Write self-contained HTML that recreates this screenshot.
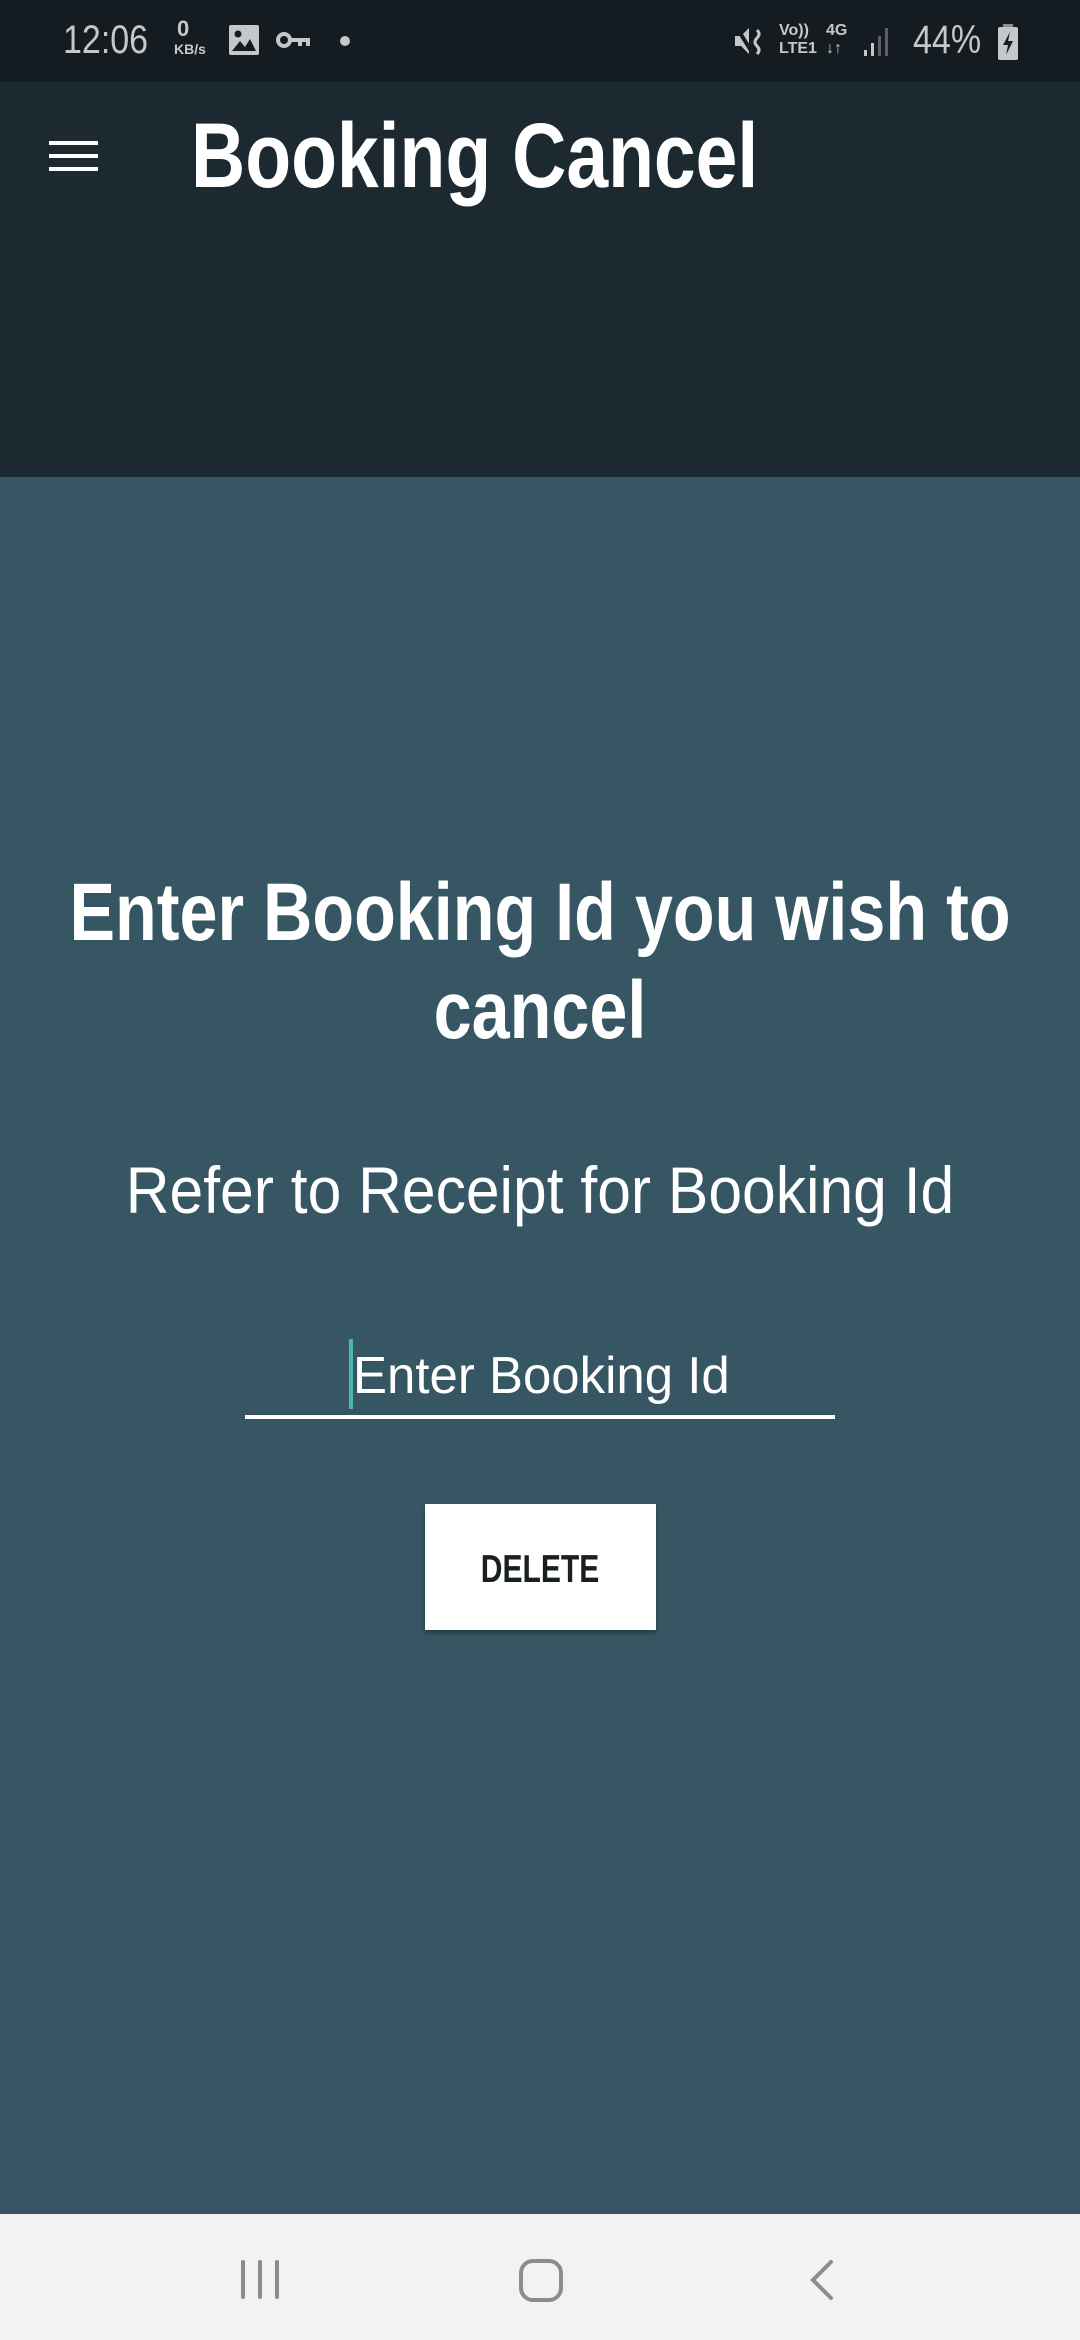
<!DOCTYPE html>
<html><head><meta charset="utf-8"><style>
*{margin:0;padding:0;box-sizing:border-box}
body{width:1080px;height:2340px;position:relative;overflow:hidden;background:#365663;font-family:"Liberation Sans",sans-serif;color:#fff}
.c{position:absolute;left:540px;line-height:1;white-space:nowrap}
</style></head><body>
<div style="position:absolute;left:0;top:0;width:1080px;height:82px;background:#151c21"></div>
<div style="position:absolute;left:0;top:82px;width:1080px;height:395px;background:#1c2930"></div>
<!-- status bar -->
<div style="position:absolute;left:63px;top:20px;font-size:40px;line-height:1;color:#c4c8ca;transform:scaleX(.85);transform-origin:left">12:06</div>
<div style="position:absolute;left:177px;top:18px;font-size:22px;line-height:1;color:#c4c8ca;font-weight:bold">0</div>
<div style="position:absolute;left:174px;top:42px;font-size:14px;line-height:1;color:#c4c8ca;font-weight:bold">KB/s</div>
<svg style="position:absolute;left:228px;top:24px" width="32" height="32" viewBox="0 0 32 32"><rect x="1" y="1" width="30" height="30" rx="2" fill="#c4c8ca"/><circle cx="10" cy="10" r="3.5" fill="#151c21"/><path d="M4 27 L12 17 L17 23 L22 15 L28 27Z" fill="#151c21"/></svg>
<svg style="position:absolute;left:276px;top:30px" width="36" height="22" viewBox="0 0 36 22"><circle cx="8" cy="10" r="6" fill="none" stroke="#c4c8ca" stroke-width="4"/><path d="M14 8 H34 V16 H30 V12 H26 V16 H22 V12 H14Z" fill="#c4c8ca"/></svg>
<div style="position:absolute;left:340px;top:36px;width:10px;height:10px;border-radius:50%;background:#c4c8ca"></div>
<svg style="position:absolute;left:733px;top:24px" width="34" height="34" viewBox="0 0 34 34"><path d="M2 12 H8 L16 4 V30 L8 22 H2Z" fill="#c4c8ca"/><path d="M4 4 L20 30" stroke="#151c21" stroke-width="4"/><path d="M24 6 Q28 10 24 14 Q20 18 24 22 Q28 26 24 30" fill="none" stroke="#c4c8ca" stroke-width="3"/></svg>
<div style="position:absolute;left:779px;top:22px;font-size:16px;line-height:18px;color:#c4c8ca;font-weight:bold">Vo))<br>LTE1</div>
<div style="position:absolute;left:826px;top:22px;font-size:16px;line-height:18px;color:#c4c8ca;font-weight:bold">4G<br>↓↑</div>
<svg style="position:absolute;left:862px;top:26px" width="30" height="32" viewBox="0 0 30 32"><rect x="2" y="24" width="3" height="6" fill="#c4c8ca"/><rect x="9" y="17" width="3" height="13" fill="#c4c8ca"/><rect x="16" y="10" width="3" height="20" fill="#5a6066"/><rect x="23" y="2" width="3" height="28" fill="#5a6066"/></svg>
<div style="position:absolute;left:913px;top:20px;font-size:40px;line-height:1;color:#c4c8ca;transform:scaleX(.85);transform-origin:left">44%</div>
<svg style="position:absolute;left:997px;top:24px" width="22" height="36" viewBox="0 0 22 36"><rect x="6" y="0" width="10" height="4" fill="#8a8f93"/><rect x="1" y="3" width="20" height="33" rx="2" fill="#c4c8ca"/><path d="M13 8 L6 21 H11 L9 31 L16 17 H11Z" fill="#151c21"/></svg>
<!-- toolbar -->
<div style="position:absolute;left:49px;top:141px;width:49px;height:4px;background:#fff"></div>
<div style="position:absolute;left:49px;top:154px;width:49px;height:4px;background:#fff"></div>
<div style="position:absolute;left:49px;top:167px;width:49px;height:4px;background:#fff"></div>
<div style="position:absolute;left:191px;top:110px;font-size:92px;font-weight:bold;line-height:1;white-space:nowrap;transform:scaleX(.816);transform-origin:left">Booking Cancel</div>
<!-- content -->
<div class="c" style="top:872px;font-size:82px;font-weight:bold;transform:translateX(-50%) scaleX(.833)">Enter Booking Id you wish to</div>
<div class="c" style="top:970px;font-size:82px;font-weight:bold;transform:translateX(-50%) scaleX(.833)">cancel</div>
<div class="c" style="top:1157px;font-size:66px;transform:translateX(-50%) scaleX(.918)">Refer to Receipt for Booking Id</div>
<div style="position:absolute;left:353px;top:1350px;font-size:52px;line-height:1;white-space:nowrap;transform:scaleX(.98);transform-origin:left">Enter Booking Id</div>
<div style="position:absolute;left:349px;top:1339px;width:4px;height:70px;background:#4db6ac"></div>
<div style="position:absolute;left:245px;top:1415px;width:590px;height:4px;background:#fff"></div>
<div style="position:absolute;left:425px;top:1504px;width:231px;height:126px;background:#fff;box-shadow:0 3px 4px rgba(0,0,0,.3)"></div>
<div class="c" style="left:540px;top:1550px;font-size:39px;font-weight:bold;color:#1a1f22;transform:translateX(-50%) scaleX(.77)">DELETE</div>
<!-- nav bar -->
<div style="position:absolute;left:0;top:2214px;width:1080px;height:126px;background:#f2f2f2"></div>
<svg style="position:absolute;left:0;top:2214px" width="1080" height="126" viewBox="0 2214 1080 126"><g stroke="#8c8c8c" stroke-width="4" stroke-linecap="round" fill="none"><path d="M243 2262 V2297 M260 2262 V2297 M277 2262 V2297"/><rect x="521" y="2261" width="40" height="39" rx="12"/><path d="M831 2262 L813 2280 L831 2298"/></g></svg>
</body></html>
